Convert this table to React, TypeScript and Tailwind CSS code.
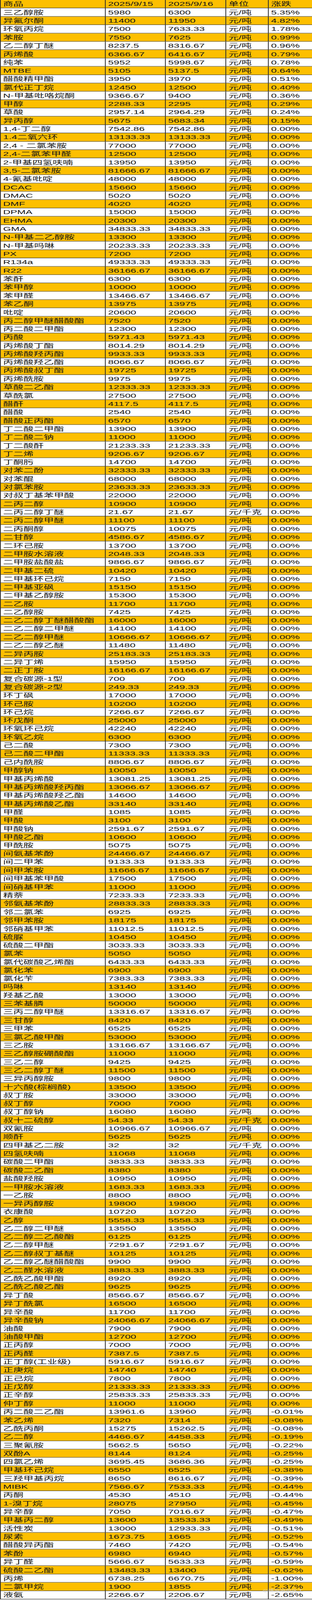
import { useState } from "react";

const headers = ["商品", "2025/9/15", "2025/9/16", "单位", "涨跌"];

// [name, 9/15, 9/16, change]
const changed: [string, string, string, string][] = [
  ["三乙醇胺", "5980", "6300", "5.35%"],
  ["异氟尔酮", "11400", "11950", "4.82%"],
  ["环氧丙烷", "7500", "7633.33", "1.78%"],
  ["苯胺", "7550", "7625", "0.99%"],
  ["乙二醇丁醚", "8237.5", "8316.67", "0.96%"],
  ["丙烯酸", "6366.67", "6416.67", "0.79%"],
  ["纯苯", "5952", "5998.67", "0.78%"],
  ["MTBE", "5105", "5137.5", "0.64%"],
  ["醋酸精甲酯", "3950", "3970", "0.51%"],
  ["氯代正丁烷", "12450", "12500", "0.40%"],
  ["N-甲基吡咯烷酮", "9366.67", "9400", "0.36%"],
  ["甲醇", "2288.33", "2295", "0.29%"],
  ["草酸", "2957.14", "2964.29", "0.24%"],
  ["异丙醇", "5675", "5683.34", "0.15%"],
];

// unchanged prices, 0.00%  [name, price, unit?]
const flat: [string, string, string?][] = [
  ["1,4-丁二醇", "7542.86"],
  ["1.4二氧六环", "13133.33"],
  ["2,4 - 二氯苯胺", "77000"],
  ["2,4-二氯苯甲醛", "12500"],
  ["2-甲基四氢呋喃", "13950"],
  ["3,5-二氯苯胺", "81666.67"],
  ["4-氰基吡啶", "48000"],
  ["DCAC", "15660"],
  ["DMAC", "5020"],
  ["DMF", "4020"],
  ["DPMA", "15000"],
  ["EHMA", "20300"],
  ["GMA", "34833.33"],
  ["N-甲基二乙醇胺", "13300"],
  ["N-甲基吗啉", "20233.33"],
  ["PX", "7200"],
  ["R134a", "49333.33"],
  ["R22", "36166.67"],
  ["苯酐", "6300"],
  ["苯甲醇", "10000"],
  ["苯甲醛", "13466.67"],
  ["苯乙酮", "13975"],
  ["吡啶", "20600"],
  ["丙二醇甲醚醋酸酯", "7520"],
  ["丙二酸二甲酯", "12300"],
  ["丙酸", "5971.43"],
  ["丙烯酸丁酯", "8014.29"],
  ["丙烯酸羟丙酯", "9933.33"],
  ["丙烯酸羟乙酯", "8066.67"],
  ["丙烯酸叔丁酯", "19725"],
  ["丙烯酰胺", "9975"],
  ["草酸二乙酯", "12333.33"],
  ["草酰氯", "27500"],
  ["醋酐", "4117.5"],
  ["醋酸", "2540"],
  ["醋酸正丙酯", "6570"],
  ["丁二酸二甲酯", "13900"],
  ["丁二酸二钠", "11000"],
  ["丁二酸酐", "21233.33"],
  ["丁二烯", "9206.67"],
  ["丁酮肟", "14700"],
  ["对苯二酚", "32333.33"],
  ["对苯醌", "68000"],
  ["对氯苯胺", "23633.33"],
  ["对叔丁基苯甲酸", "22000"],
  ["二丙二醇", "10900"],
  ["二丙二醇丁醚", "21.67", "元/千克"],
  ["二丙二醇甲醚", "11100"],
  ["二丙酮醇", "10075"],
  ["二甘醇", "4586.67"],
  ["二环己胺", "13700"],
  ["二甲胺水溶液", "2048.33"],
  ["二甲胺盐酸盐", "9866.67"],
  ["二甲基二硫", "10420"],
  ["二甲基环己烷", "7150"],
  ["二甲基亚砜", "15150"],
  ["二甲基乙醇胺", "15300"],
  ["二乙胺", "11700"],
  ["二乙醇胺", "7425"],
  ["二乙二醇丁醚醋酸酯", "16000"],
  ["二乙二醇二甲醚", "14100"],
  ["二乙二醇甲醚", "10666.67"],
  ["二乙二醇乙醚", "11480"],
  ["二异丙胺", "25183.33"],
  ["二异丁烯", "15950"],
  ["二正丁胺", "16166.67"],
  ["复合碳源-1型", "700"],
  ["复合碳源-2型", "249.33"],
  ["环丁砜", "17000"],
  ["环己胺", "10200"],
  ["环己烷", "7266.67"],
  ["环戊酮", "25000"],
  ["环氧环己烷", "42240"],
  ["环氧乙烷", "6300"],
  ["己二酸", "7300"],
  ["己二酸二甲酯", "11333.33"],
  ["己内酰胺", "8806.67"],
  ["甲醇钠", "10050"],
  ["甲基丙烯酸", "13081.25"],
  ["甲基丙烯酸羟丙酯", "13066.67"],
  ["甲基丙烯酸羟乙酯", "14600"],
  ["甲基丙烯酸乙酯", "33140"],
  ["甲醛", "1085"],
  ["甲酸", "3100"],
  ["甲酸钠", "2591.67"],
  ["甲酸乙酯", "10600"],
  ["甲酰胺", "5075"],
  ["间氨基苯酚", "24466.67"],
  ["间二甲苯", "9133.33"],
  ["间甲苯胺", "11666.67"],
  ["间甲基苯甲酸", "17500"],
  ["间硝基甲苯", "11000"],
  ["精萘", "7233.33"],
  ["邻氨基苯酚", "28833.33"],
  ["邻二氯苯", "6925"],
  ["邻甲苯胺", "18175"],
  ["邻硝基甲苯", "11012.5"],
  ["硫脲", "10450"],
  ["硫酸二甲酯", "3033.33"],
  ["氯苯", "5050"],
  ["氯代碳酸乙烯酯", "6433.33"],
  ["氯化苯", "6900"],
  ["氯化苄", "7383.33"],
  ["吗啉", "13140"],
  ["羟基乙酸", "13000"],
  ["三苯基膦", "50000"],
  ["三丙二醇甲醚", "13316.67"],
  ["三甘醇", "8420"],
  ["三甲苯", "6525"],
  ["三氯乙酸甲酯", "53000"],
  ["三乙胺", "13166.67"],
  ["三乙醇胺硼酸酯", "11000"],
  ["三乙二醇", "9425"],
  ["三乙二醇丁醚", "11500"],
  ["三异丙醇胺", "9800"],
  ["十六酸(棕榈酸)", "13500"],
  ["叔丁胺", "33000"],
  ["叔丁醇", "7000"],
  ["叔丁醇钠", "16080"],
  ["叔十二硫醇", "54.33", "元/千克"],
  ["双氰胺", "10966.67"],
  ["顺酐", "5625"],
  ["四甲基乙二胺", "32", "元/千克"],
  ["四氢呋喃", "11068"],
  ["碳酸二甲酯", "3833.33"],
  ["碳酸二乙酯", "8380"],
  ["盐酸羟胺", "10950"],
  ["一甲胺水溶液", "1683.33"],
  ["一乙胺", "8800"],
  ["一异丙醇胺", "19800"],
  ["衣康酸", "10720"],
  ["乙醇", "5558.33"],
  ["乙二醇二甲醚", "13550"],
  ["乙二醇二乙酸酯", "6125"],
  ["乙二醇甲醚", "7291.67"],
  ["乙二醇叔丁基醚", "10125"],
  ["乙二醇乙醚醋酸酯", "9900"],
  ["乙二醛水溶液", "3883.33"],
  ["乙酰乙酸甲酯", "8920"],
  ["乙酰乙酸乙酯", "9625"],
  ["异丁酸", "8566.67"],
  ["异丁酰氯", "16500"],
  ["异辛酸", "11700"],
  ["异辛酸钠", "24066.67"],
  ["油酸", "7900"],
  ["油酸甲酯", "12700"],
  ["正丙醇", "7000"],
  ["正丙醛", "7387.5"],
  ["正丁醇(工业级)", "5916.67"],
  ["正庚烷", "14740"],
  ["正己烷", "7800"],
  ["正戊醇", "21333.33"],
  ["正辛醇", "25833.33"],
  ["仲丁醇", "11000"],
];

const falling: [string, string, string, string][] = [
  ["丙二酸二乙酯", "13961.6", "13960", "-0.01%"],
  ["苯乙烯", "7320", "7314", "-0.08%"],
  ["乙酰丙酮", "15275", "15262.5", "-0.08%"],
  ["乙二醇", "4466.67", "4458.33", "-0.19%"],
  ["三聚氰胺", "5662.5", "5650", "-0.22%"],
  ["双酚A", "8144", "8124", "-0.25%"],
  ["四氯乙烯", "3695.45", "3686.36", "-0.25%"],
  ["甲基环己烷", "6550", "6525", "-0.38%"],
  ["三羟甲基丙烷", "8650", "8616.67", "-0.39%"],
  ["MIBK", "7566.67", "7533.33", "-0.44%"],
  ["丙酮", "4530", "4510", "-0.44%"],
  ["1-溴丁烷", "28075", "27950", "-0.45%"],
  ["异辛醇", "7050", "7016.67", "-0.47%"],
  ["甲基丙二醇", "13600", "13533.33", "-0.49%"],
  ["活性炭", "13000", "12933.33", "-0.51%"],
  ["尿素", "1673.75", "1665", "-0.52%"],
  ["醋酸异丙酯", "7460", "7420", "-0.54%"],
  ["苯酚", "6980", "6940", "-0.57%"],
  ["异丁醛", "5666.67", "5633.33", "-0.59%"],
  ["硫酸二乙酯", "13483.33", "13400", "-0.62%"],
  ["丙烯", "6738.25", "6670.75", "-1.00%"],
  ["二氯甲烷", "1900", "1855", "-2.37%"],
  ["液氨", "2266.67", "2206.67", "-2.65%"],
];

const rows: string[][] = [
  headers,
  ...changed.map(([n, a, b, p]) => [n, a, b, "元/吨", p]),
  ...flat.map(([n, a, u]) => [n, a, a, u ?? "元/吨", "0.00%"]),
  ...falling.map(([n, a, b, p]) => [n, a, b, "元/吨", p]),
];

const SHEET_H = 6990;

export default function App() {
  // the browser window can be shorter than the sheet; squeeze it to fit
  const [fit] = useState(() =>
    typeof window === "undefined" ? 1 : Math.min(1, window.innerHeight / SHEET_H)
  );

  return (
    <div className="h-screen w-[800px] overflow-hidden bg-white">
      <div
        className="relative h-[6990px] w-[800px] origin-top-left"
        style={{ transform: `scaleY(${fit})` }}
      >
        <div className="grid grid-cols-[269px_154px_155px_109px_113px] auto-rows-[36.4px] border-l-2 border-[#2e2e2e] font-[family-name:Liberation_Sans,Noto_Sans_CJK_SC,sans-serif] text-[26px] leading-[30px] text-[#141414]">
          {rows.map((r, i) =>
            r.map((c, j) => (
              <div
                key={`${i}-${j}`}
                className={`flex items-center whitespace-nowrap border-r-2 border-b-2 border-[#2e2e2e] pl-[6px] ${
                  i % 2 === 0 ? "bg-[#fdbf00]" : "bg-white"
                }`}
              >
                {c}
              </div>
            ))
          )}
        </div>

        {/* watermark */}
        <span className="absolute right-[22px] bottom-[30px] font-[family-name:Noto_Sans_CJK_SC,sans-serif] text-[15px] text-[#d2d2d2]">
          @德丽丽的化工
        </span>
      </div>
    </div>
  );
}
